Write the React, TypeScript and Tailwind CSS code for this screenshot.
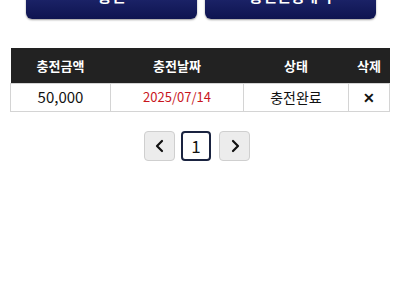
const rows = [
  { amount: "50,000", date: "2025/07/14", status: "충전완료" },
];

const font = { fontFamily: '"Noto Sans CJK KR", "Noto Sans", sans-serif' };

export default function App() {
  return (
    <div className="w-[400px] h-[300px] overflow-hidden bg-white" style={font}>
      {/* top buttons (scrolled off) */}
      <div className="flex gap-2 pl-[26px] pr-[24px] -mt-[26px]">
        <button className="h-[45px] w-[171px] rounded-md bg-gradient-to-b from-[#2d3585] to-[#0e1450] text-white text-[15px] font-bold shadow-[0_1px_2px_rgba(0,0,0,0.4)]">
          충전
        </button>
        <button className="h-[45px] w-[171px] rounded-md bg-gradient-to-b from-[#2d3585] to-[#0e1450] text-white text-[15px] font-bold shadow-[0_1px_2px_rgba(0,0,0,0.4)]">
          충전신청내역
        </button>
      </div>

      {/* history table */}
      <div className="mt-[29px] mx-[10px]">
        <table className="w-[379px] border-collapse table-fixed">
          <thead>
            <tr className="bg-[#222222] text-white text-[13px] font-bold h-[35px]">
              <th className="w-[100px] font-bold">충전금액</th>
              <th className="w-[133px] font-bold">충전날짜</th>
              <th className="w-[105px] font-bold">상태</th>
              <th className="w-[41px] font-bold">삭제</th>
            </tr>
          </thead>
          <tbody>
            {rows.map((r) => (
              <tr key={r.date} className="h-[28px] text-center">
                <td className="border border-[#d4d4d4] text-[15px] text-[#111]">{r.amount}</td>
                <td className="border border-[#d4d4d4] text-[13px] text-[#c8161d]">{r.date}</td>
                <td className="border border-[#d4d4d4] text-[14px] text-[#111]">{r.status}</td>
                <td className="border border-[#d4d4d4] text-[14px] font-bold text-[#111]">✕</td>
              </tr>
            ))}
          </tbody>
        </table>
      </div>

      {/* pagination */}
      <div className="flex justify-center items-center mt-[19px] pr-[6px]">
        <button className="w-[31px] h-[30px] rounded-[4px] border border-[#cfcfcf] bg-[#ececec] flex items-center justify-center">
          <svg width="12" height="14" viewBox="0 0 12 14" fill="none" stroke="#111" strokeWidth="2.2" strokeLinecap="round" strokeLinejoin="round">
            <path d="M8 2 L3 7 L8 12" />
          </svg>
        </button>
        <button className="ml-[6px] w-[30px] h-[30px] rounded-[4px] border-2 border-[#1a2340] bg-white text-[17px] text-[#111] flex items-center justify-center">
          1
        </button>
        <button className="ml-[8px] w-[31px] h-[30px] rounded-[4px] border border-[#cfcfcf] bg-[#ececec] flex items-center justify-center">
          <svg width="12" height="14" viewBox="0 0 12 14" fill="none" stroke="#111" strokeWidth="2.2" strokeLinecap="round" strokeLinejoin="round">
            <path d="M4 2 L9 7 L4 12" />
          </svg>
        </button>
      </div>
    </div>
  );
}
